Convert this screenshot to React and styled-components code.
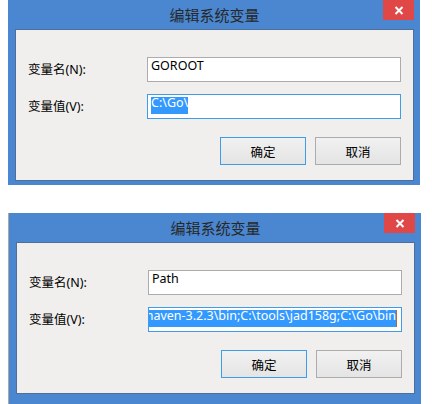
import React from 'react'
import styled, { createGlobalStyle } from 'styled-components'

const GlobalStyle = createGlobalStyle`
  html, body {
    margin: 0;
    padding: 0;
    background: #fff;
  }
  body {
    font-family: "Noto Sans", "Noto Sans CJK SC", sans-serif;
    font-size: 12px;
    color: #000;
  }
`

const Page = styled.div`
  width: 432px;
  height: 404px;
  overflow: hidden;
  box-sizing: border-box;
  padding-left: 8px;
  display: flex;
  flex-direction: column;
  gap: 28px;
`

const Frame = styled.section`
  width: ${({ $shadow }) => ($shadow ? 413 : 412)}px;
  flex-shrink: 0;
  box-sizing: border-box;
  background: #4a87d0;
  border-left: ${({ $shadow }) => ($shadow ? '1px solid #a9a9a9' : 'none')};
  padding: 0 6px ${({ $bottom }) => $bottom}px 7px;
`

const TitleBar = styled.header`
  height: 29px;
  display: grid;
  grid-template-columns: 31px 1fr 31px;
  align-items: start;
`

const Title = styled.h1`
  grid-column: 2;
  margin: 0;
  text-align: center;
  font-family: "Noto Sans CJK SC", sans-serif;
  font-weight: 400;
  font-size: 15px;
  line-height: 29px;
  color: #282828;
`

const CloseButton = styled.div`
  grid-column: 3;
  width: 31px;
  height: 20px;
  background: #e04848;
  display: flex;
  align-items: center;
  justify-content: center;
  padding-top: 1px;
  box-sizing: border-box;
`

const Client = styled.div`
  background: #f0efed;
  border: 1px solid #4d6f9a;
  padding: 27px 12px 15px 12px;
`

const Form = styled.div`
  display: grid;
  grid-template-columns: 119px 1fr;
  row-gap: 12px;
  align-items: center;
`

const Label = styled.label`
  font-size: 12.5px;
  line-height: 25px;
  color: #000;
`

const Field = styled.div`
  height: 25px;
  box-sizing: border-box;
  border: 1px solid ${({ $focused }) => ($focused ? '#3e9de9' : '#acacac')};
  background: #fff;
  padding: 2px ${({ $end }) => ($end ? 4 : 3)}px 0 3px;
  display: flex;
  justify-content: ${({ $end }) => ($end ? 'flex-end' : 'flex-start')};
  overflow: hidden;
  white-space: nowrap;
`

const Value = styled.span`
  display: inline-block;
  flex-shrink: 0;
  height: 17px;
  line-height: 12px;
  font-size: 12.5px;
  color: ${({ $selected }) => ($selected ? '#fff' : '#000')};
  background: ${({ $selected }) => ($selected ? '#3399ff' : 'transparent')};
`

const Caret = styled.span`
  flex-shrink: 0;
  width: 1px;
  height: 17px;
  background: #b8682a;
`

const Actions = styled.div`
  display: flex;
  justify-content: flex-end;
  gap: 9px;
  margin-top: 18px;
`

const Button = styled.button`
  width: 86px;
  height: 28px;
  box-sizing: border-box;
  padding: 0;
  border-radius: 0;
  border: 1px solid ${({ $primary }) => ($primary ? '#3e9de9' : '#acacac')};
  background: linear-gradient(#f1f1f1, #e4e4e4);
  font-family: "Noto Sans CJK SC", sans-serif;
  font-size: 12.5px;
  color: #000;
`

const CloseIcon = () => (
  <svg width="10" height="9" viewBox="0 0 10 9">
    <path d="M1.5 1 L8.5 8 M8.5 1 L1.5 8" stroke="#fff" strokeWidth="2" />
  </svg>
)

const Dialog = ({ name, value, selectedEnd, shadow, bottom }) => (
  <Frame $shadow={shadow} $bottom={bottom}>
    <TitleBar>
      <Title>编辑系统变量</Title>
      <CloseButton>
        <CloseIcon />
      </CloseButton>
    </TitleBar>
    <Client>
      <Form>
        <Label>变量名(N):</Label>
        <Field>
          <Value>{name}</Value>
        </Field>
        <Label>变量值(V):</Label>
        <Field $focused $end={selectedEnd}>
          <Value $selected>{value}</Value>
          {selectedEnd && <Caret />}
        </Field>
      </Form>
      <Actions>
        <Button $primary>确定</Button>
        <Button>取消</Button>
      </Actions>
    </Client>
  </Frame>
)

export default function App () {
  return (
    <>
      <GlobalStyle />
      <Page>
        <Dialog name="GOROOT" value={'C:\\Go\\'} bottom={4} />
        <Dialog
          name="Path"
          value={'C:\\tools\\apache-maven-3.2.3\\bin;C:\\tools\\jad158g;C:\\Go\\bin'}
          selectedEnd
          shadow
          bottom={14}
        />
      </Page>
    </>
  )
}
